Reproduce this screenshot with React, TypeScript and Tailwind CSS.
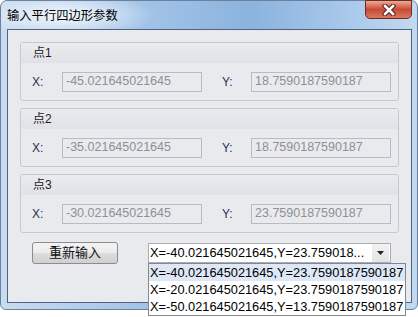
import React from 'react';

const points = [
  { name: '点1', x: '-45.021645021645', y: '18.7590187590187' },
  { name: '点2', x: '-35.021645021645', y: '18.7590187590187' },
  { name: '点3', x: '-30.021645021645', y: '23.7590187590187' },
];

const options = [
  'X=-40.021645021645,Y=23.7590187590187',
  'X=-20.021645021645,Y=23.7590187590187',
  'X=-50.021645021645,Y=13.7590187590187',
];

const font = 'font-["Liberation_Sans","Noto_Sans_CJK_SC",sans-serif]';

const CloseGlyph = () => (
  <svg width="14" height="12" viewBox="0 0 14 12">
    <path d="M3 2 L11 10 M11 2 L3 10" stroke="#5a2219" strokeWidth="4.6" strokeLinecap="square" fill="none" />
    <path d="M3 2 L11 10 M11 2 L3 10" stroke="#ffffff" strokeWidth="2.6" strokeLinecap="square" fill="none" />
  </svg>
);

const PointGroup: React.FC<{ name: string; x: string; y: string }> = ({ name, x, y }) => (
  <div className="h-[59px] border border-[#c6c8ce] rounded-[3px] flex flex-col overflow-hidden">
    {/* header */}
    <div className="h-[20px] bg-gradient-to-b from-[#eaebef] to-[#e1e2e7] flex items-center pl-[12px] text-[12px] text-[#1b1b1b]">
      {name}
    </div>
    <div className="flex-1 flex items-center pl-[11px] text-[12px] text-[#1e3456]">
      <span className="w-[30px]">X:</span>
      <div className="w-[140px] h-[20px] border border-[#b9bbc1] flex items-center pl-[3px] text-[12.5px] text-[#8e9096]">{x}</div>
      <span className="w-[29px] ml-[20px]">Y:</span>
      <div className="w-[140px] h-[20px] border border-[#b9bbc1] flex items-center pl-[3px] text-[12.5px] text-[#8e9096]">{y}</div>
    </div>
  </div>
);

export default function App() {
  return (
    <div className={`w-[418px] h-[317px] bg-white relative ${font}`}>
      {/* window frame */}
      <div className="w-[418px] h-[310px] rounded-t-[7px] rounded-b-[6px] border border-[#6c809c] flex flex-col bg-[radial-gradient(ellipse_90px_22px_at_64px_14px,rgba(255,255,255,0.85),rgba(255,255,255,0)),linear-gradient(to_right,#c9dcf1,#a2c3e7_35%,#8bb3de_60%,#abcaeb_85%,#c3d9f0)]">
        {/* title bar */}
        <div className="h-[28px] flex items-start justify-between shrink-0">
          <span className="mt-[8px] ml-[6px] text-[12.3px] leading-[14px] text-black">输入平行四边形参数</span>
          <div className="mr-[5px] w-[47px] h-[19px] -mt-px rounded-b-[5px] border border-[#6e2a20] bg-gradient-to-b from-[#e9a99b] via-[#c94a34] to-[#d87862] flex items-center justify-center">
            <CloseGlyph />
          </div>
        </div>
        {/* client area */}
        <div className="ml-[6px] w-[405px] h-[274px] border border-[#51627e] bg-[#e9eaee] px-[12px] pt-[12px] flex flex-col gap-[7px] relative">
          {points.map((p) => (
            <PointGroup key={p.name} {...p} />
          ))}
          <div className="flex items-start mt-[2px] pl-[12px]">
            <button className="w-[86px] h-[22px] border border-[#8b8c8e] rounded-[3px] bg-[linear-gradient(to_bottom,#f3f3f3,#ececec_48%,#dcdcdc_52%,#d0d0d0)] text-[13px] text-[#111] flex items-center justify-center">
              重新输入
            </button>
            <div className="ml-[30px] mt-px w-[243px] h-[20px] border border-[#abadb3] bg-white flex items-center">
              <span className="flex-1 pl-[1px] text-[12.8px] text-black whitespace-nowrap overflow-hidden">X=-40.021645021645,Y=23.759018...</span>
              <div className="w-[17px] h-[18px] mr-px bg-gradient-to-b from-[#f2f2f2] to-[#e4e4e4] flex items-center justify-center">
                <svg width="7" height="4" viewBox="0 0 7 4"><path d="M0 0 H7 L3.5 4 Z" fill="#222" /></svg>
              </div>
            </div>
          </div>
        </div>
      </div>
      {/* open dropdown list */}
      <div className="absolute left-[148px] top-[263px] w-[258px] h-[53px] border border-[#828790] bg-white flex flex-col text-[12.8px] text-black">
        {options.map((o, i) => (
          <div key={o} className={`h-[17px] pl-[1px] flex items-center whitespace-nowrap ${i === 0 ? 'bg-[#dde7f5]' : ''}`}>
            {o}
          </div>
        ))}
      </div>
    </div>
  );
}
